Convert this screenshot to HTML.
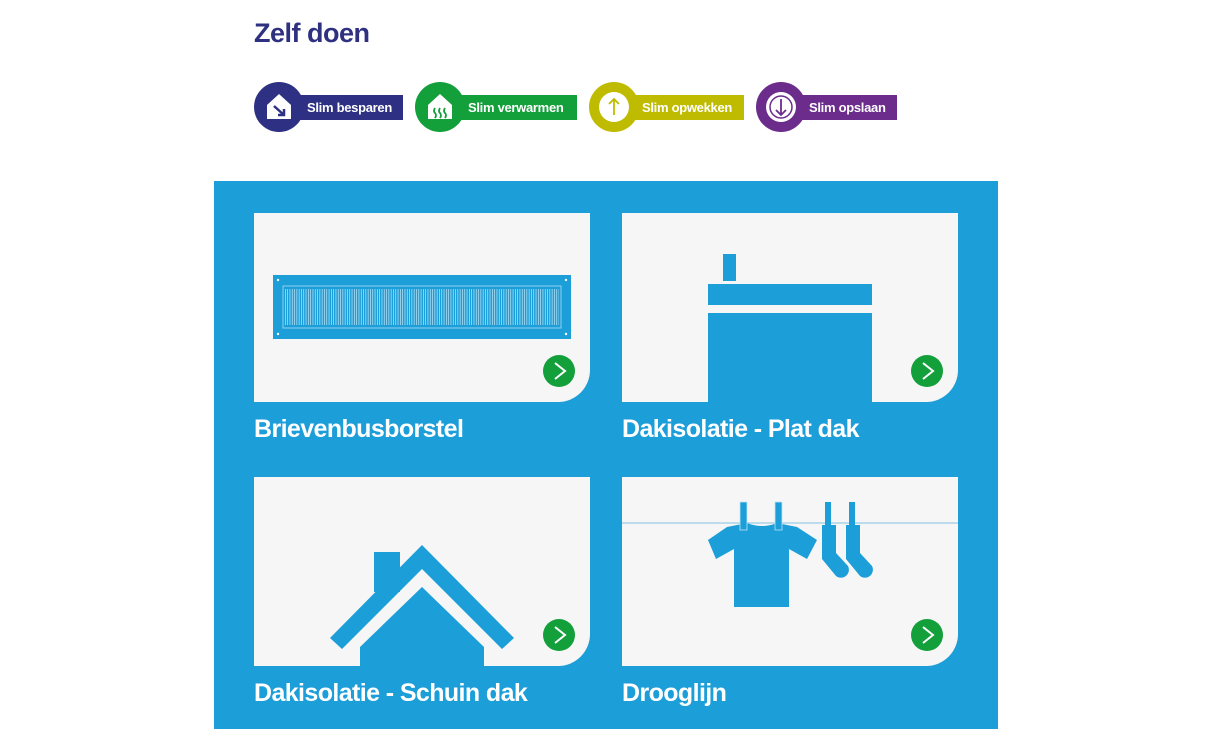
<!DOCTYPE html>
<html><head><style>
body{margin:0;background:#fff;font-family:"Liberation Sans",Arial,sans-serif;}
.h{position:absolute;left:254px;top:18px;font-size:27px;font-weight:bold;color:#2e3080;letter-spacing:-0.5px}
.b{position:absolute;top:82px;height:50px}
.b .bar{position:absolute;top:13px;height:25px;left:36px;color:#fff;font-size:13px;font-weight:bold;line-height:25px;padding-left:17px;letter-spacing:-0.3px}
.b .c{position:absolute;left:0;top:0;width:50px;height:50px;border-radius:50%}
.panel{position:absolute;left:214px;top:181px;width:784px;height:548px;background:#1c9ed9}
.card{position:absolute;width:336px;height:189px;background:#f6f6f6;border-bottom-right-radius:32px;overflow:hidden}
.t{position:absolute;color:#fff;font-size:25px;font-weight:bold;letter-spacing:-0.6px}
.go{position:absolute;right:15px;bottom:15px;width:32px;height:32px;border-radius:50%;background:#139f3a}
</style></head><body>
<div class="h">Zelf doen</div>

<div class="b" style="left:254px;width:149px"><div class="bar" style="background:#2e3084;width:96px">Slim besparen</div><div class="c" style="background:#2e3084"><svg width="50" height="50"><path d="M13 23 L25 12 L37 23 V37 H13Z" fill="#fff"/><path d="M20 24 L30 33 M30 27 V33 H24" stroke="#2e3084" stroke-width="2.5" fill="none"/></svg></div></div>

<div class="b" style="left:415px;width:162px"><div class="bar" style="background:#139f3a;width:109px">Slim verwarmen</div><div class="c" style="background:#139f3a"><svg width="50" height="50"><path d="M13 23 L25 12 L37 23 V37 H13Z" fill="#fff"/><path d="M20 26q-2 3 0 5t0 5M25 26q-2 3 0 5t0 5M30 26q-2 3 0 5t0 5" stroke="#139f3a" stroke-width="1.8" fill="none"/></svg></div></div>

<div class="b" style="left:589px;width:155px"><div class="bar" style="background:#bfbb00;width:102px">Slim opwekken</div><div class="c" style="background:#bfbb00"><svg width="50" height="50"><circle cx="25" cy="25" r="15" fill="#fff"/><path d="M25 33V17M20 22l5-5 5 5" stroke="#bfbb00" stroke-width="1.8" fill="none"/></svg></div></div>

<div class="b" style="left:756px;width:141px"><div class="bar" style="background:#6b2c8c;width:88px">Slim opslaan</div><div class="c" style="background:#6b2c8c"><svg width="50" height="50"><circle cx="25" cy="25" r="15" fill="#fff"/><circle cx="25" cy="25" r="11" fill="none" stroke="#6b2c8c" stroke-width="1.5"/><path d="M25 17V33M20 28l5 5 5-5" stroke="#6b2c8c" stroke-width="1.8" fill="none"/></svg></div></div>

<div class="panel">
<div class="card" style="left:40px;top:32px"><svg width="336" height="189">
<rect x="19" y="62" width="298" height="64" fill="#1c9ed9"/>
<rect x="29" y="73" width="278" height="42" fill="none" stroke="#8fd0ef" stroke-width="1"/>
<path d="M31 94 H305" stroke="#d5eef9" stroke-width="36" stroke-dasharray="0.7 1.6" opacity="0.9"/>
<circle cx="24" cy="67" r="1.2" fill="#fff"/><circle cx="312" cy="67" r="1.2" fill="#fff"/><circle cx="24" cy="121" r="1.2" fill="#fff"/><circle cx="312" cy="121" r="1.2" fill="#fff"/>
</svg><div class="go"><svg width="32" height="32"><path d="M12 8l10 8-10 8" stroke="#fff" stroke-width="2" fill="none"/></svg></div></div>
<div class="t" style="left:40px;top:234px">Brievenbusborstel</div>

<div class="card" style="left:408px;top:32px"><svg width="336" height="189">
<rect x="101" y="41" width="13" height="27" fill="#1c9ed9"/>
<rect x="86" y="71" width="164" height="21" fill="#1c9ed9"/>
<rect x="86" y="100" width="164" height="89" fill="#1c9ed9"/>
</svg><div class="go"><svg width="32" height="32"><path d="M12 8l10 8-10 8" stroke="#fff" stroke-width="2" fill="none"/></svg></div></div>
<div class="t" style="left:408px;top:234px">Dakisolatie - Plat dak</div>

<div class="card" style="left:40px;top:296px"><svg width="336" height="189">
<rect x="120" y="75" width="26" height="40" fill="#1c9ed9"/>
<path d="M76 161 L168 68 L260 161 L248 172 L168 92 L88 172Z" fill="#1c9ed9"/>
<path d="M106 189 V170 L168 110 L230 170 V189Z" fill="#1c9ed9"/>
</svg><div class="go"><svg width="32" height="32"><path d="M12 8l10 8-10 8" stroke="#fff" stroke-width="2" fill="none"/></svg></div></div>
<div class="t" style="left:40px;top:498px">Dakisolatie - Schuin dak</div>

<div class="card" style="left:408px;top:296px"><svg width="336" height="189">
<line x1="0" y1="46" x2="336" y2="46" stroke="#a9d3ec" stroke-width="1.5"/>
<path d="M125 46 Q140 52 155 46 L175 50 L195 63 L185 82 L167 72 V130 H112 V72 L94 82 L86 63 L105 50Z" fill="#1c9ed9"/>
<rect x="118" y="25" width="7" height="28" fill="#1c9ed9" stroke="#bfe3f5" stroke-width="0.8"/>
<rect x="153" y="25" width="7" height="28" fill="#1c9ed9" stroke="#bfe3f5" stroke-width="0.8"/>
<path d="M200 48 h14 v28 l12 13 a8 8 0 0 1 -12 10 l-14 -17Z" fill="#1c9ed9"/>
<path d="M224 48 h14 v28 l12 13 a8 8 0 0 1 -12 10 l-14 -17Z" fill="#1c9ed9"/>
<rect x="203" y="25" width="6" height="28" fill="#1c9ed9"/><rect x="227" y="25" width="6" height="28" fill="#1c9ed9"/>
</svg><div class="go"><svg width="32" height="32"><path d="M12 8l10 8-10 8" stroke="#fff" stroke-width="2" fill="none"/></svg></div></div>
<div class="t" style="left:408px;top:498px">Drooglijn</div>
</div>
</body></html>
